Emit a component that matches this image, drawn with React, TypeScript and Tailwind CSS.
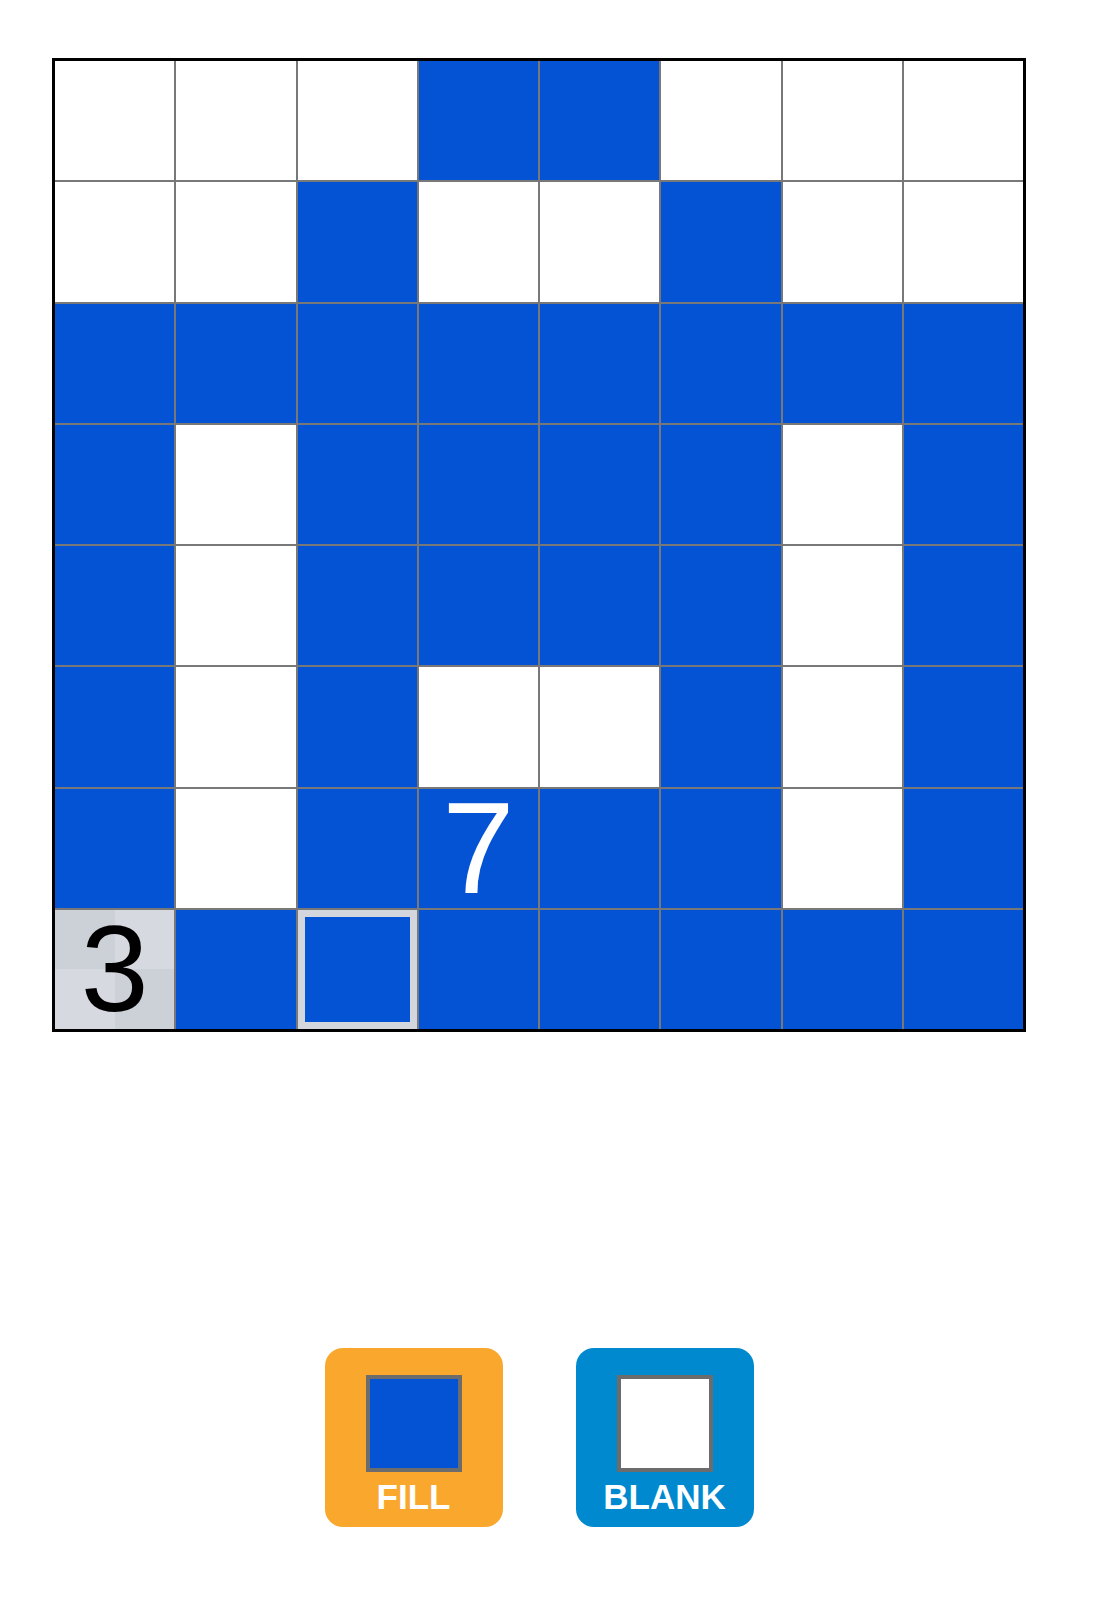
const BLUE = "bg-[#0553d5]";

// 1 = filled, 0 = blank
const board = [
  [0, 0, 0, 1, 1, 0, 0, 0],
  [0, 0, 1, 0, 0, 1, 0, 0],
  [1, 1, 1, 1, 1, 1, 1, 1],
  [1, 0, 1, 1, 1, 1, 0, 1],
  [1, 0, 1, 1, 1, 1, 0, 1],
  [1, 0, 1, 0, 0, 1, 0, 1],
  [1, 0, 1, 1, 1, 1, 0, 1],
  [2, 1, 1, 1, 1, 1, 1, 1],
];

const Cell = ({ r, c, v }: { r: number; c: number; v: number }) => {
  if (v === 2) {
    return (
      <div className="relative grid grid-cols-2 grid-rows-2 bg-[#d6d9df]">
        <div className="bg-[#ccd0d7]" />
        <div />
        <div />
        <div className="bg-[#ccd0d7]" />
        <span className="absolute inset-0 flex items-center justify-center text-[122px] leading-none text-black">
          3
        </span>
      </div>
    );
  }
  if (r === 7 && c === 2) {
    return (
      <div className="bg-[#d3d6dc] p-[7px]">
        <div className={`h-full w-full ${BLUE}`} />
      </div>
    );
  }
  if (r === 6 && c === 3) {
    return (
      <div className={`flex items-center justify-center ${BLUE} text-[130px] leading-none text-white`}>
        7
      </div>
    );
  }
  return <div className={v ? BLUE : "bg-white"} />;
};

const ToolButton = ({ label, bg, swatch }: { label: string; bg: string; swatch: string }) => (
  <div className={`flex h-[179px] w-[178px] flex-col items-center rounded-[18px] ${bg} pt-[27px]`}>
    <div className={`h-[97px] w-[96px] border-[4px] border-[#6c6c6c] ${swatch}`} />
    <span className="mt-[7px] text-[35px] font-bold leading-none text-white">{label}</span>
  </div>
);

export default function App() {
  return (
    <div
      className="min-h-[1600px] bg-white pl-[52px] pt-[58px]"
      style={{ fontFamily: '"Liberation Sans", Arial, sans-serif' }}
    >
      <div className="h-[974px] w-[974px] border-[3px] border-black bg-[#787878]">
        <div className="grid h-full w-full grid-cols-8 grid-rows-8 gap-[2px]">
          {board.map((row, r) => row.map((v, c) => <Cell key={`${r}-${c}`} r={r} c={c} v={v} />))}
        </div>
      </div>
      <div className="mt-[316px] flex w-[974px] justify-center gap-[73px]">
        <ToolButton label="FILL" bg="bg-[#f9a82d]" swatch={BLUE} />
        <ToolButton label="BLANK" bg="bg-[#0089cf]" swatch="bg-white" />
      </div>
    </div>
  );
}
